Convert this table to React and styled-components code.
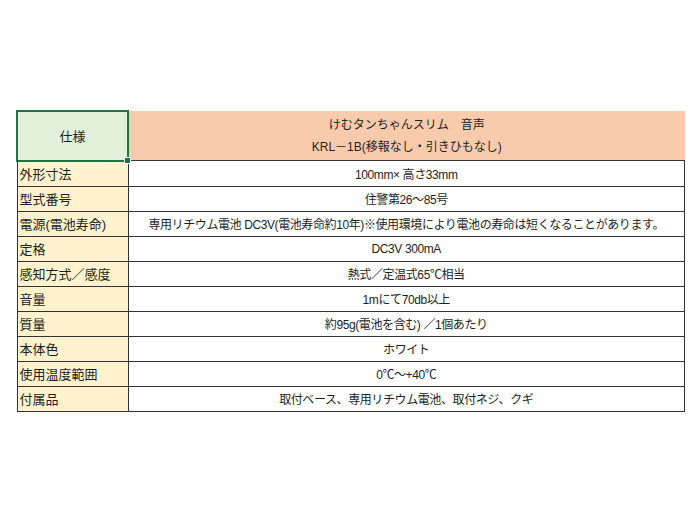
import styled, { createGlobalStyle } from "styled-components";

const GlobalStyle = createGlobalStyle`
    body {
        margin: 0;
        background: #ffffff;
        font-family: "Liberation Sans", "Noto Sans CJK JP", sans-serif;
        color: #1e1e1e;
    }
`;

const specs = [
    ["外形寸法", "100mm× 高さ33mm"],
    ["型式番号", "住警第26〜85号"],
    ["電源(電池寿命)", "専用リチウム電池 DC3V(電池寿命約10年)※使用環境により電池の寿命は短くなることがあります。"],
    ["定格", "DC3V 300mA"],
    ["感知方式／感度", "熱式／定温式65℃相当"],
    ["音量", "1mにて70db以上"],
    ["質量", "約95g(電池を含む) ／1個あたり"],
    ["本体色", "ホワイト"],
    ["使用温度範囲", "0℃〜+40℃"],
    ["付属品", "取付ベース、専用リチウム電池、取付ネジ、クギ"],
];

export default function App() {
    return (
        <Page>
            <GlobalStyle />
            <SpecTable>
                <tbody>
                    <tr>
                        <HeadLabel>
                            仕様
                            <Handle />
                        </HeadLabel>
                        <HeadTitle>
                            <div>けむタンちゃんスリム　音声</div>
                            <div>KRL－1B(移報なし・引きひもなし)</div>
                        </HeadTitle>
                    </tr>
                    {specs.map(([label, value]) => (
                        <tr key={label}>
                            <Label>{label}</Label>
                            <Value>{value}</Value>
                        </tr>
                    ))}
                </tbody>
            </SpecTable>
        </Page>
    );
}

const Page = styled.div`
    width: 700px;
    height: 525px;
    padding: 110px 0 0 16px;
    box-sizing: border-box;
`;

const SpecTable = styled.table`
    border-collapse: collapse;
    table-layout: fixed;
    width: 669px;
`;

const HeadLabel = styled.td`
    position: relative;
    width: 109px;
    height: 46px;
    padding: 0;
    background: #e2efda;
    border: 2px solid #217346;
    text-align: center;
    font-size: 13px;
`;

const Handle = styled.span`
    position: absolute;
    right: -4px;
    bottom: -4px;
    width: 5px;
    height: 5px;
    background: #217346;
    border: 1px solid #ffffff;
    z-index: 2;
`;

const HeadTitle = styled.td`
    padding: 0;
    height: 49px;
    background: #f8cbad;
    border-bottom: 1px solid #333;
    text-align: center;
    font-size: 12px;
    line-height: 22px;
`;

const Label = styled.td`
    height: 24px;
    padding: 0 0 0 2px;
    background: #fff2cc;
    border: 1px solid #333;
    font-size: 13px;
    white-space: nowrap;
`;

const Value = styled.td`
    height: 24px;
    padding: 0;
    border: 1px solid #333;
    text-align: center;
    font-size: 12px;
    letter-spacing: -0.4px;
    white-space: nowrap;
`;
